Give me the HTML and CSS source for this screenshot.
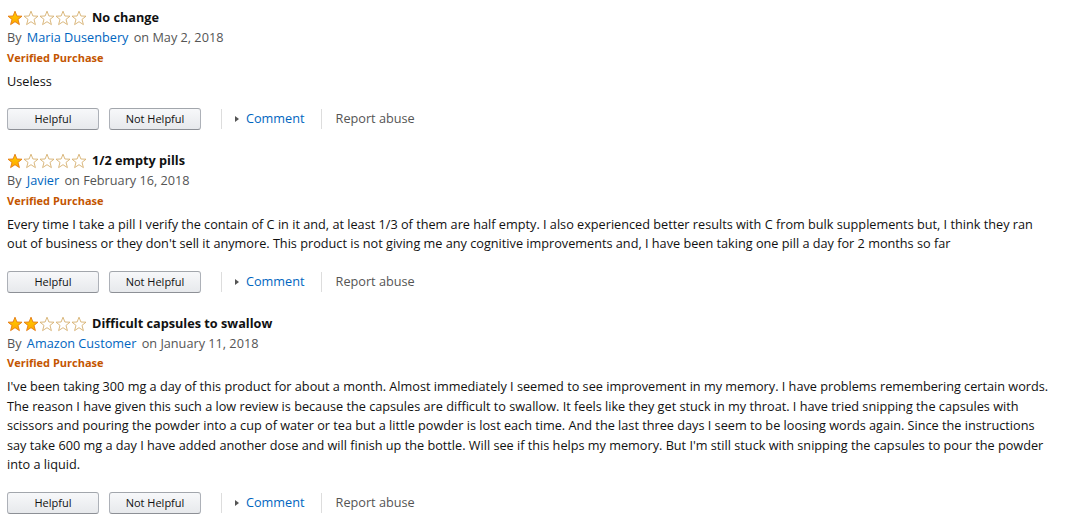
FILE: index.html
```html
<!DOCTYPE html>
<html>
<head>
<meta charset="utf-8">
<link rel="stylesheet" href="styles.css">
</head>
<body>
<svg width="0" height="0" class="defs">
  <defs>
    <linearGradient id="gold" x1="0" y1="0" x2="0" y2="1">
      <stop offset="0" stop-color="#ffce00"/>
      <stop offset="1" stop-color="#ffa700"/>
    </linearGradient>
    <symbol id="star-full" viewBox="0 0 16 16">
      <path d="M8 1.2 L9.9 6 L15 6.2 L11 9.4 L12.4 14.6 L8 11.7 L3.6 14.6 L5 9.4 L1 6.2 L6.1 6 Z" fill="url(#gold)" stroke="#e47911" stroke-width="0.9" stroke-linejoin="round"/>
    </symbol>
    <symbol id="star-empty" viewBox="0 0 16 16">
      <path d="M8 1.2 L9.9 6 L15 6.2 L11 9.4 L12.4 14.6 L8 11.7 L3.6 14.6 L5 9.4 L1 6.2 L6.1 6 Z" fill="#fff" stroke="#d6b06f" stroke-width="0.9" stroke-linejoin="round"/>
    </symbol>
  </defs>
</svg>

<div class="review">
  <div class="head">
    <span class="stars">
      <svg class="star"><use href="#star-full"/></svg><svg class="star"><use href="#star-empty"/></svg><svg class="star"><use href="#star-empty"/></svg><svg class="star"><use href="#star-empty"/></svg><svg class="star"><use href="#star-empty"/></svg>
    </span>
    <span class="title">No change</span>
  </div>
  <div class="byline">By <a class="link">Maria Dusenbery</a> on May 2, 2018</div>
  <div class="verified">Verified Purchase</div>
  <div class="body">Useless</div>
  <div class="actions">
    <button class="btn">Helpful</button>
    <button class="btn">Not Helpful</button>
    <span class="sep"></span>
    <span class="comment"><span class="tri"></span><a class="link">Comment</a></span>
    <span class="sep"></span>
    <span class="report">Report abuse</span>
  </div>
</div>

<div class="review">
  <div class="head">
    <span class="stars">
      <svg class="star"><use href="#star-full"/></svg><svg class="star"><use href="#star-empty"/></svg><svg class="star"><use href="#star-empty"/></svg><svg class="star"><use href="#star-empty"/></svg><svg class="star"><use href="#star-empty"/></svg>
    </span>
    <span class="title">1/2 empty pills</span>
  </div>
  <div class="byline">By <a class="link">Javier</a> on February 16, 2018</div>
  <div class="verified">Verified Purchase</div>
  <div class="body">Every time I take a pill I verify the contain of C in it and, at least 1/3 of them are half empty. I also experienced better results with C from bulk supplements but, I think they ran out of business or they don't sell it anymore. This product is not giving me any cognitive improvements and, I have been taking one pill a day for 2 months so far</div>
  <div class="actions">
    <button class="btn">Helpful</button>
    <button class="btn">Not Helpful</button>
    <span class="sep"></span>
    <span class="comment"><span class="tri"></span><a class="link">Comment</a></span>
    <span class="sep"></span>
    <span class="report">Report abuse</span>
  </div>
</div>

<div class="review">
  <div class="head">
    <span class="stars">
      <svg class="star"><use href="#star-full"/></svg><svg class="star"><use href="#star-full"/></svg><svg class="star"><use href="#star-empty"/></svg><svg class="star"><use href="#star-empty"/></svg><svg class="star"><use href="#star-empty"/></svg>
    </span>
    <span class="title">Difficult capsules to swallow</span>
  </div>
  <div class="byline">By <a class="link">Amazon Customer</a> on January 11, 2018</div>
  <div class="verified">Verified Purchase</div>
  <div class="body">I've been taking 300 mg a day of this product for about a month. Almost immediately I seemed to see improvement in my memory. I have problems remembering certain words. The reason I have given this such a low review is because the capsules are difficult to swallow. It feels like they get stuck in my throat. I have tried snipping the capsules with scissors and pouring the powder into a cup of water or tea but a little powder is lost each time. And the last three days I seem to be loosing words again. Since the instructions say take 600 mg a day I have added another dose and will finish up the bottle. Will see if this helps my memory. But I'm still stuck with snipping the capsules to pour the powder into a liquid.</div>
  <div class="actions">
    <button class="btn">Helpful</button>
    <button class="btn">Not Helpful</button>
    <span class="sep"></span>
    <span class="comment"><span class="tri"></span><a class="link">Comment</a></span>
    <span class="sep"></span>
    <span class="report">Report abuse</span>
  </div>
</div>
</body>
</html>
```

FILE: styles.css
```css
* { box-sizing: border-box; }
html, body { background: #fff; }
body {
  margin: 0;
  padding: 8px 7px 0 7px;
  width: 1062px;
  font-family: "Open Sans", "Noto Sans", sans-serif;
  font-size: 12.7px;
  line-height: 19.5px;
  color: #111;
}
.defs { position: absolute; width: 0; height: 0; }
.review { margin-bottom: 21px; }
.head { display: flex; align-items: center; height: 20px; }
.stars { display: flex; gap: 0; margin-right: 5px; }
.star { width: 16px; height: 16px; display: block; }
.title { font-weight: 700; font-size: 12.7px; }
.byline { color: #555; }
.link { color: #0066c0; }
.byline .link { margin: 0 2px; }
.verified { color: #c45500; font-weight: 700; font-size: 11px; line-height: 19.5px; }
.body { margin-top: 4.5px; }
.actions { display: flex; align-items: center; margin-top: 17px; height: 22px; }
.btn {
  width: 92px;
  height: 22px;
  margin: 0 10px 0 0;
  padding: 0;
  border: 1px solid #adb1b8;
  border-top-color: #a2a6ac;
  border-bottom-color: #8d9096;
  border-radius: 3px;
  background: linear-gradient(to bottom, #f7f8fa, #e7e9ec);
  font-family: "Open Sans", "Noto Sans", sans-serif;
  font-size: 11px;
  color: #111;
  line-height: 20px;
}
.sep { width: 1px; height: 20px; background: #ddd; margin: 0 14px 0 16px; }
.btn + .sep { margin: 0 13px 0 10px; }
.comment { display: flex; align-items: center; }
.tri {
  width: 0; height: 0;
  border-left: 4px solid #555;
  border-top: 3.5px solid transparent;
  border-bottom: 3.5px solid transparent;
  margin-right: 7px;
}
.report { color: #555; }
```
